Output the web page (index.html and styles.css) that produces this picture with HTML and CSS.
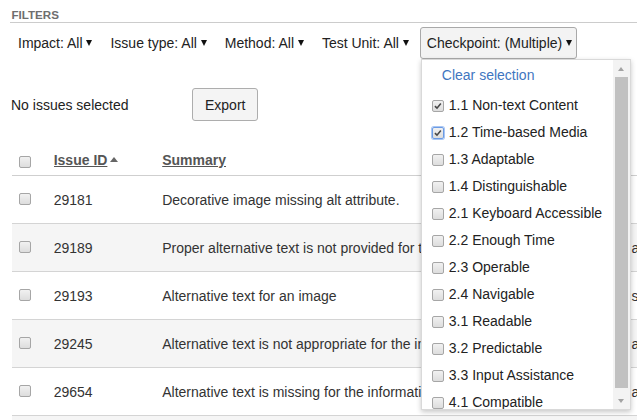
FILE: index.html
```html
<!DOCTYPE html>
<html>
<head>
<meta charset="utf-8">
<link rel="stylesheet" href="styles.css">
</head>
<body>
<div class="page">
  <div class="filters-title">FILTERS</div>
  <div class="filter-bar">
    <button class="filter">Impact: All <span class="caret"></span></button>
    <button class="filter">Issue type: All <span class="caret"></span></button>
    <button class="filter">Method: All <span class="caret"></span></button>
    <button class="filter">Test Unit: All <span class="caret"></span></button>
    <div class="filter-wrap">
      <button class="filter active">Checkpoint: (Multiple) <span class="caret"></span></button>
      <div class="dropdown">
        <div class="dd-list">
          <a class="clear">Clear selection</a>
          <label class="dd-item"><span class="cb checked"><svg viewBox="0 0 12 12" width="10" height="10"><path d="M2.3 6.2 L4.8 8.6 L9.4 3" fill="none" stroke="#474747" stroke-width="1.9"/></svg></span>1.1 Non-text Content</label>
          <label class="dd-item"><span class="cb checked focus"><svg viewBox="0 0 12 12" width="10" height="10"><path d="M2.3 6.2 L4.8 8.6 L9.4 3" fill="none" stroke="#474747" stroke-width="1.9"/></svg></span>1.2 Time-based Media</label>
          <label class="dd-item"><span class="cb"></span>1.3 Adaptable</label>
          <label class="dd-item"><span class="cb"></span>1.4 Distinguishable</label>
          <label class="dd-item"><span class="cb"></span>2.1 Keyboard Accessible</label>
          <label class="dd-item"><span class="cb"></span>2.2 Enough Time</label>
          <label class="dd-item"><span class="cb"></span>2.3 Operable</label>
          <label class="dd-item"><span class="cb"></span>2.4 Navigable</label>
          <label class="dd-item"><span class="cb"></span>3.1 Readable</label>
          <label class="dd-item"><span class="cb"></span>3.2 Predictable</label>
          <label class="dd-item"><span class="cb"></span>3.3 Input Assistance</label>
          <label class="dd-item"><span class="cb"></span>4.1 Compatible</label>
        </div>
        <div class="scrollbar">
          <div class="sb-btn"><span class="arrow-up"></span></div>
          <div class="sb-track"><div class="sb-thumb"></div></div>
          <div class="sb-btn"><span class="arrow-down"></span></div>
        </div>
      </div>
    </div>
  </div>

  <div class="actions">
    <span class="status">No issues selected</span>
    <button class="btn">Export</button>
  </div>

  <table class="issues">
    <thead>
      <tr>
        <th class="c-cb"><span class="cb head"></span></th>
        <th class="c-id"><a class="sort">Issue ID</a><span class="sort-up"></span></th>
        <th class="c-sum"><a class="sort">Summary</a></th>
        <th class="c-more"></th>
      </tr>
    </thead>
    <tbody>
      <tr>
        <td class="c-cb"><span class="cb"></span></td>
        <td class="c-id">29181</td>
        <td class="c-sum">Decorative image missing alt attribute.</td>
        <td class="c-more"></td>
      </tr>
      <tr class="alt">
        <td class="c-cb"><span class="cb"></span></td>
        <td class="c-id">29189</td>
        <td class="c-sum">Proper alternative text is not provided for the image</td>
        <td class="c-more">at</td>
      </tr>
      <tr>
        <td class="c-cb"><span class="cb"></span></td>
        <td class="c-id">29193</td>
        <td class="c-sum">Alternative text for an image</td>
        <td class="c-more">s</td>
      </tr>
      <tr class="alt">
        <td class="c-cb"><span class="cb"></span></td>
        <td class="c-id">29245</td>
        <td class="c-sum">Alternative text is not appropriate for the image</td>
        <td class="c-more">at</td>
      </tr>
      <tr>
        <td class="c-cb"><span class="cb"></span></td>
        <td class="c-id">29654</td>
        <td class="c-sum">Alternative text is missing for the informative image</td>
        <td class="c-more">at</td>
      </tr>
      <tr class="alt">
        <td class="c-cb">&nbsp;</td>
        <td class="c-id">&nbsp;</td>
        <td class="c-sum">&nbsp;</td>
        <td class="c-more">&nbsp;</td>
      </tr>
    </tbody>
  </table>
</div>
</body>
</html>
```

FILE: styles.css
```css
html, body {
  margin: 0;
  padding: 0;
  overflow: hidden;
  background: #fff;
}
body {
  font-family: "Liberation Sans", Arial, sans-serif;
  font-size: 14px;
  color: #333;
  width: 637px;
  height: 420px;
}
.page {
  position: relative;
}
.filters-title {
  margin-left: 10px;
  padding: 8px 0 0 1.5px;
  height: 14px;
  line-height: 14px;
  font-size: 11.6px;
  font-weight: bold;
  color: #6e6e6e;
  border-bottom: 1px solid #cccccc;
}
.filter-bar {
  display: flex;
  align-items: flex-start;
  gap: 7px;
  margin-top: 4px;
  padding-left: 11px;
}
.filter {
  font: inherit;
  color: #222;
  height: 32px;
  line-height: 30px;
  padding: 0 3px 0 6px;
  margin: 0;
  border: 1px solid transparent;
  border-radius: 3px;
  background: transparent;
  white-space: nowrap;
  cursor: pointer;
}
.filter.active {
  background: #f3f3f3;
  border-color: #a9a9a9;
  padding-right: 4px;
}
.caret {
  display: inline-block;
  width: 0;
  height: 0;
  border-left: 3.5px solid transparent;
  border-right: 3.5px solid transparent;
  border-top: 6px solid #111;
  vertical-align: 2px;
}
.filter-wrap {
  position: relative;
}
.dropdown {
  position: absolute;
  left: 1px;
  top: 32px;
  width: 210px;
  height: 351px;
  box-sizing: border-box;
  border: 1px solid #d9d9d9;
  background: #fff;
  box-shadow: 0 2px 5px rgba(0, 0, 0, 0.22);
  display: flex;
  z-index: 10;
  overflow: hidden;
}
.dd-list {
  flex: 1;
  padding-top: 2px;
  overflow: hidden;
}
.clear {
  display: block;
  height: 27px;
  line-height: 27px;
  padding-left: 20px;
  margin-bottom: 3px;
  color: #3f76bf;
  cursor: pointer;
}
.dd-item {
  display: flex;
  align-items: center;
  height: 27px;
  line-height: 27px;
  padding-left: 10px;
  color: #222;
  white-space: nowrap;
}
.cb {
  display: inline-flex;
  align-items: center;
  justify-content: center;
  box-sizing: border-box;
  width: 12px;
  height: 12px;
  border: 1px solid #a6a6a6;
  border-radius: 2px;
  background: linear-gradient(#f1f1f1, #dddddd);
  flex: none;
}
.dd-item .cb {
  margin-right: 5px;
}
.cb.focus {
  border-color: #6b9be4;
  box-shadow: 0 0 0 1px #a9c6f3;
}
.cb svg {
  display: block;
}
.scrollbar {
  width: 17px;
  display: flex;
  flex-direction: column;
  background: #f3f3f3;
}
.sb-btn {
  height: 17px;
  display: flex;
  align-items: center;
  justify-content: center;
  flex: none;
}
.arrow-up {
  width: 0;
  height: 0;
  border-left: 3.5px solid transparent;
  border-right: 3.5px solid transparent;
  border-bottom: 4px solid #a3a3a3;
}
.arrow-down {
  width: 0;
  height: 0;
  border-left: 3.5px solid transparent;
  border-right: 3.5px solid transparent;
  border-top: 4px solid #a3a3a3;
}
.sb-track {
  flex: 1;
}
.sb-thumb {
  margin: 0 2px;
  height: 311px;
  background: #c1c1c1;
}
.actions {
  display: flex;
  align-items: baseline;
  margin-top: 29px;
  padding-left: 11px;
}
.status {
  width: 181px;
  color: #222;
}
.btn {
  font: inherit;
  color: #222;
  height: 33px;
  line-height: 30px;
  padding: 0 12px;
  margin: 0;
  border: 1px solid #adadad;
  border-radius: 3px;
  background: #f4f4f4;
}
.issues {
  margin-left: 12px;
  margin-top: 29px;
  border-collapse: collapse;
  table-layout: fixed;
  width: 720px;
}
.issues th, .issues td {
  padding: 0;
  text-align: left;
  vertical-align: top;
  line-height: 20px;
  white-space: nowrap;
  overflow: hidden;
}
.issues th {
  padding-bottom: 5px;
  border-bottom: 1px solid #cfcfcf;
  font-weight: bold;
  color: #555;
}
.issues td {
  padding-top: 14px;
  padding-bottom: 13px;
  border-bottom: 1px solid #d4d4d4;
  color: #333;
}
.issues tr.alt td {
  background: #f5f5f5;
}
.c-cb {
  width: 41.5px;
}
.issues .c-cb {
  padding-left: 7px;
  box-sizing: border-box;
}
.issues td.c-cb .cb {
  margin-top: 3px;
  display: flex;
}
.issues th.c-cb .cb {
  margin-top: 6px;
  display: flex;
}
.c-id {
  width: 108px;
}
.c-sum {
  width: 467px;
}
.c-more {
  width: 100px;
}
.sort {
  color: #555;
  text-decoration: underline;
}
.sort-up {
  display: inline-block;
  width: 0;
  height: 0;
  margin-left: 3px;
  border-left: 4px solid transparent;
  border-right: 4px solid transparent;
  border-bottom: 5px solid #666;
  vertical-align: 3px;
}
```
